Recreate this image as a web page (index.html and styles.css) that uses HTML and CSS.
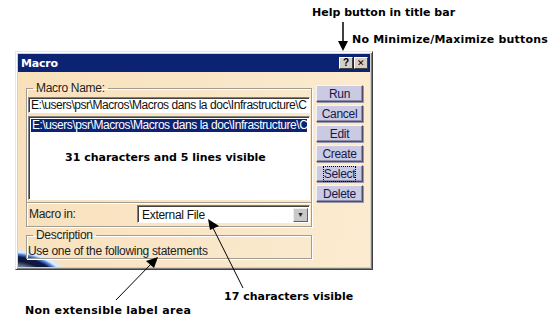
FILE: index.html
```html
<!DOCTYPE html>
<html lang="en">
<head>
    <meta charset="UTF-8">
    <meta name="viewport" content="width=device-width, initial-scale=1.0">
    <title>Macro dialog</title>
    <link rel="stylesheet" href="styles.css">
</head>
<body>
    <div class="page">
        <div class="window">
            <div class="titlebar">
                <span class="title">Macro</span>
                <span class="title-btn help">?</span>
                <span class="title-btn close">&#x2715;</span>
            </div>
            <div class="client">
                <div class="corner-art"></div>
                <div class="left">
                    <fieldset class="group name-group">
                        <legend>Macro Name:</legend>
                        <div class="edit">E:\users\psr\Macros\Macros dans la doc\Infrastructure\C</div>
                        <div class="listbox">
                            <div class="row selected">E:\users\psr\Macros\Macros dans la doc\Infrastructure\C</div>
                            <div class="list-note">31 characters and 5 lines visible</div>
                        </div>
                    </fieldset>
                    <div class="macro-in">
                        <span class="label">Macro in:</span>
                        <div class="combo">
                            <span class="combo-text">External File</span>
                            <span class="drop">&#x25BC;</span>
                        </div>
                    </div>
                    <fieldset class="group desc-group">
                        <legend>Description</legend>
                        <div class="desc">Use one of the following statements</div>
                    </fieldset>
                </div>
                <div class="buttons">
                    <button class="btn">Run</button>
                    <button class="btn">Cancel</button>
                    <button class="btn">Edit</button>
                    <button class="btn">Create</button>
                    <button class="btn focused"><span>Select</span></button>
                    <button class="btn">Delete</button>
                </div>
            </div>
        </div>

        <!-- callouts -->
        <div class="note note-help">Help button in title bar</div>
        <div class="note note-nominmax">No Minimize/Maximize buttons</div>
        <div class="note note-17">17 characters visible</div>
        <div class="note note-label">Non extensible label area</div>

        <svg class="arrows" width="553" height="321" viewBox="0 0 553 321">
            <line x1="343" y1="22" x2="343" y2="42" stroke="#000" stroke-width="1.5"/>
            <polygon points="338,41 348,41 343,51" fill="#000"/>
            <line x1="243" y1="288" x2="213" y2="228" stroke="#000" stroke-width="1"/>
            <polygon points="208,219 219,226 210,230" fill="#000"/>
            <line x1="116" y1="300" x2="152" y2="263" stroke="#000" stroke-width="1"/>
            <polygon points="158,257 154,268 146,261" fill="#000"/>
        </svg>
    </div>
</body>
</html>
```

FILE: styles.css
```css
body {
    margin: 0;
    background: #fff;
    font-family: "Liberation Sans", Arial, sans-serif;
}

.page {
    position: relative;
    width: 553px;
    height: 321px;
    padding: 51px 0 0 15px;
    box-sizing: border-box;
    overflow: hidden;
}

.window {
    width: 358px;
    height: 219px;
    box-sizing: border-box;
    background: #d4d0c8;
    border: 1px solid;
    border-color: #e8e6e0 #404040 #404040 #e8e6e0;
    padding: 1px;
    box-shadow: inset 1px 1px 0 #fff, inset -1px -1px 0 #808080;
    display: flex;
    flex-direction: column;
}

.titlebar {
    height: 18px;
    margin: 1px 1px 0 1px;
    background: #0c2272;
    display: flex;
    align-items: center;
    padding: 0 2px 0 3px;
}

.title {
    flex: 1;
    color: #fff;
    font-family: "DejaVu Sans", Tahoma, sans-serif;
    font-weight: bold;
    font-size: 11px;
    letter-spacing: -0.2px;
}

.title-btn {
    width: 14px;
    height: 12px;
    box-sizing: border-box;
    background: #d4d0c8;
    border: 1px solid;
    border-color: #fff #404040 #404040 #fff;
    font-size: 10px;
    line-height: 10px;
    text-align: center;
    color: #000;
    font-weight: bold;
}

.title-btn.help {
    margin-right: 1px;
}

.title-btn.close {
    font-size: 9px;
    font-weight: normal;
}

.client {
    position: relative;
    flex: 1;
    margin: 0 1px 1px 1px;
    background: linear-gradient(100deg, #f8e0bb 0%, #fae7c9 60%, #fcebd0 100%);
    display: flex;
    padding: 9px 7px 0 8px;
    gap: 4px;
    overflow: hidden;
}

.corner-art {
    position: absolute;
    left: 0;
    bottom: 0;
    width: 80px;
    height: 40px;
    background: radial-gradient(ellipse 70px 46px at -8px 64px,
        #8a98a8 0, #6c7c94 56%, #101838 66%, #0c1a50 75%, #5a8ad8 81%, #d8ecff 85%, rgba(250,232,205,0) 96%);
}

.left {
    position: relative;
    width: 286px;
    display: flex;
    flex-direction: column;
}

.group {
    margin: 0;
    padding: 2px 1px 2px 1px;
    min-width: 0;
    border: 1px solid #a09c94;
    box-shadow: inset 1px 1px 0 #fff, 1px 1px 0 #fff;
    font-size: 12px;
}

.group legend {
    padding: 0 3px;
    margin-left: 5px;
    line-height: 14px;
    color: #222;
    font-size: 12px;
    letter-spacing: -0.3px;
}

.edit {
    height: 16px;
    box-sizing: border-box;
    background: #fff;
    border: 1px solid;
    border-color: #808080 #fff #fff #808080;
    box-shadow: inset 1px 1px 0 #404040;
    padding: 1px 0 0 2px;
    font-size: 12px;
    line-height: 13px;
    white-space: nowrap;
    overflow: hidden;
    letter-spacing: -0.45px;
    color: #111;
}

.listbox {
    margin-top: 3px;
    height: 84px;
    box-sizing: border-box;
    background: #fff;
    border: 1px solid;
    border-color: #808080 #fff #fff #808080;
    box-shadow: inset 1px 1px 0 #404040;
    padding: 2px 2px 0 2px;
}

.row {
    height: 13px;
    line-height: 13px;
    padding-left: 1px;
    font-size: 12px;
    white-space: nowrap;
    overflow: hidden;
    letter-spacing: -0.45px;
}

.row.selected {
    background: #0c2272;
    color: #fff;
}

.list-note {
    margin: 19px 0 0 34px;
    font-family: "DejaVu Sans", sans-serif;
    font-weight: bold;
    font-size: 11px;
    line-height: 14px;
    color: #000;
}

.macro-in {
    height: 24px;
    box-sizing: border-box;
    border: 1px solid #a09c94;
    border-top: none;
    box-shadow: inset 1px 0 0 #fff, 1px 1px 0 #fff;
    display: flex;
    align-items: center;
    padding: 0 1px 1px 2px;
}

.label {
    width: 108px;
    font-size: 12px;
    letter-spacing: -0.3px;
    color: #222;
}

.combo {
    flex: 1;
    height: 18px;
    box-sizing: border-box;
    background: #fff;
    border: 1px solid;
    border-color: #808080 #fff #fff #808080;
    box-shadow: inset 1px 1px 0 #404040;
    display: flex;
    align-items: center;
    padding: 1px 1px 0 4px;
}

.combo-text {
    flex: 1;
    font-size: 12px;
    letter-spacing: -0.3px;
    color: #111;
}

.drop {
    width: 15px;
    height: 14px;
    box-sizing: border-box;
    background: #c8c8c8;
    border: 1px solid;
    border-color: #eee #606060 #606060 #eee;
    font-size: 7px;
    line-height: 12px;
    text-align: center;
    color: #222;
}

.desc-group {
    margin-top: 1px;
    padding: 3px 1px 0 1px;
    height: 31px;
    box-sizing: border-box;
}

.desc {
    font-size: 12px;
    line-height: 12px;
    letter-spacing: -0.3px;
    color: #222;
    white-space: nowrap;
    position: relative;
    z-index: 1;
}

.buttons {
    width: 47px;
    display: flex;
    flex-direction: column;
    gap: 3px;
    padding-top: 4px;
}

.btn {
    height: 17px;
    margin: 0;
    padding: 0;
    box-sizing: border-box;
    background: #cacae2;
    border: 1px solid;
    border-color: #f4f4ff #4c4c6c #4c4c6c #f4f4ff;
    box-shadow: inset -1px -1px 0 #8c8cac, 1px 1px 0 #9a98a8;
    font-family: "Liberation Sans", Arial, sans-serif;
    font-size: 12px;
    line-height: 14px;
    letter-spacing: -0.3px;
    color: #181848;
}

.btn.focused span {
    outline: 1px dotted #000;
    outline-offset: 0;
}

.note {
    position: absolute;
    font-family: "DejaVu Sans", sans-serif;
    font-weight: bold;
    font-size: 11px;
    line-height: 14px;
    color: #000;
    white-space: nowrap;
}

.note-help {
    left: 312px;
    top: 6px;
}

.note-nominmax {
    left: 352px;
    top: 33px;
    letter-spacing: 0.2px;
}

.note-17 {
    left: 224px;
    top: 290px;
}

.note-label {
    left: 25px;
    top: 304px;
    letter-spacing: 0.3px;
}

.arrows {
    position: absolute;
    left: 0;
    top: 0;
    pointer-events: none;
}
```
